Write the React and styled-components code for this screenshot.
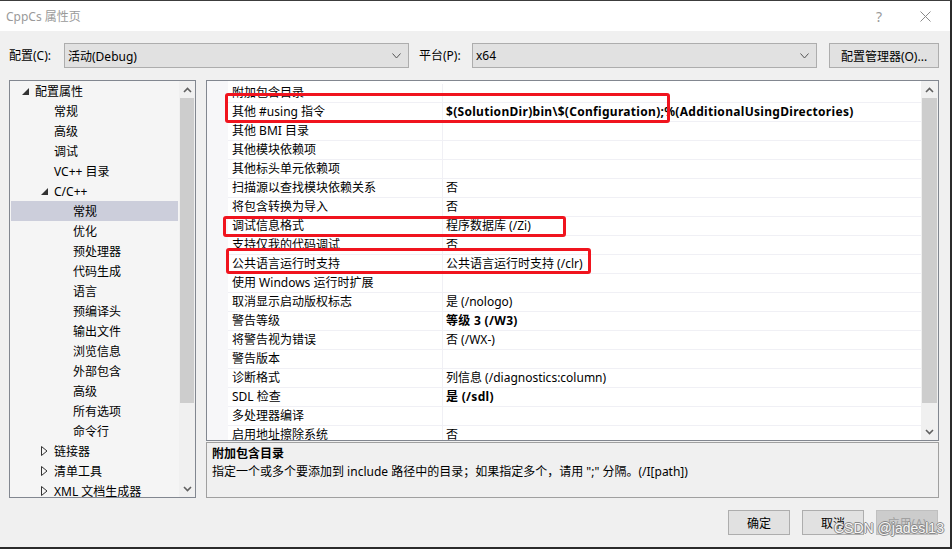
import styled, { createGlobalStyle } from "styled-components"

const Global = createGlobalStyle`
  body {
    margin: 0;
    background: #f0f0f0;
    font-family: "Noto Sans", "Noto Sans CJK SC", sans-serif;
    font-size: 12px;
    color: #000;
  }
`

const Window = styled.div`
  position: relative;
  width: 952px;
  height: 549px;
  box-sizing: border-box;
  background: #f0f0f0;
  border-top: 1px solid #3c3c3c;
  border-right: 2px solid #2b2b2b;
  border-bottom: 2px solid #2b2b2b;
  overflow: hidden;
`

const TitleBar = styled.div`
  height: 30px;
  background: #fff;
  display: flex;
  align-items: center;
  padding: 0 2px 0 6px;
  color: #9a9a9a;
  font-size: 12px;
`

const TitleText = styled.div`
  flex: 1;
`

const TitleBtn = styled.div`
  width: 46px;
  height: 30px;
  display: flex;
  align-items: center;
  justify-content: center;
  color: #9a9a9a;
  font-size: 14px;
`

const Body = styled.div`
  padding: 12px 11px 0 9px;
`

const ConfigRow = styled.div`
  display: flex;
  align-items: center;
  height: 25px;
`

const Label = styled.div`
  width: ${(p) => p.w}px;
  line-height: 25px;
`

const Combo = styled.div`
  width: ${(p) => p.w}px;
  height: 25px;
  box-sizing: border-box;
  border: 1px solid #adadad;
  background: #e1e1e1;
  display: flex;
  align-items: center;
  padding-left: 3px;
  margin-right: 10px;
`

const ComboText = styled.div`
  flex: 1;
`

const Chevron = styled.svg`
  width: 9px;
  height: 6px;
  margin-right: 7px;
`

const Button = styled.div`
  width: ${(p) => p.w || 62}px;
  height: 25px;
  box-sizing: border-box;
  border: 1px solid ${(p) => (p.disabled ? "#bfbfbf" : "#adadad")};
  background: ${(p) => (p.disabled ? "#cccccc" : "#e1e1e1")};
  display: flex;
  align-items: center;
  justify-content: center;
  margin-left: ${(p) => p.ml || 0}px;
  color: ${(p) => (p.disabled ? "#a0a0a0" : "#000")};
`

const Main = styled.div`
  display: flex;
  margin-top: 12px;
  height: 418px;
`

const Tree = styled.div`
  width: 187px;
  box-sizing: border-box;
  border: 1px solid #828790;
  background: #f5f5f5;
  display: flex;
  overflow: hidden;
`

const TreeList = styled.div`
  flex: 1;
  padding: 0 1px;
`

const TreeItem = styled.div`
  height: 20px;
  display: flex;
  align-items: center;
  padding-left: ${(p) => p.level * 19 + 11}px;
  background: ${(p) => (p.selected ? "#cccedb" : "transparent")};
  white-space: nowrap;
`

const Arrow = styled.span`
  width: 13px;
  display: inline-flex;
  align-items: center;
`

const VScroll = styled.div`
  width: ${(p) => p.w || 16}px;
  background: #f0f0f0;
  display: flex;
  flex-direction: column;
  align-items: center;
`

const ScrollBtn = styled.div`
  height: 17px;
  width: 100%;
  display: flex;
  align-items: center;
  justify-content: center;
`

const Thumb = styled.div`
  width: calc(100% - 2px);
  height: ${(p) => p.h}px;
  background: #cdcdcd;
`

const Spacer = styled.div`
  flex: 1;
`

const RightCol = styled.div`
  margin-left: 10px;
  flex: 1;
  display: flex;
  flex-direction: column;
`

const Grid = styled.div`
  height: 361px;
  box-sizing: border-box;
  border: 1px solid #828790;
  background: #fff;
  display: flex;
  overflow: hidden;
`

const GridMargin = styled.div`
  width: 21px;
  background: #f7f7f9;
`

const Rows = styled.div`
  flex: 1;
  padding-top: 3px;
`

const Row = styled.div`
  height: 19px;
  box-sizing: border-box;
  display: flex;
  border-bottom: 1px solid #f0f0f5;
`

const NameCell = styled.div`
  width: 215px;
  padding-left: 4px;
  box-sizing: border-box;
  line-height: 18px;
  border-right: 1px solid #f0f0f5;
  white-space: nowrap;
  overflow: hidden;
`

const ValueCell = styled.div`
  flex: 1;
  padding-left: 3px;
  line-height: 18px;
  white-space: nowrap;
  overflow: hidden;
  font-weight: ${(p) => (p.bold ? 700 : 400)};
  letter-spacing: ${(p) => (p.bold ? "0.3px" : "0")};
`

const Desc = styled.div`
  margin-top: 1px;
  height: 56px;
  box-sizing: border-box;
  border: 1px solid #a0a0a0;
  background: #f0f0f0;
  padding: 2px 5px;
`

const DescTitle = styled.div`
  font-weight: 700;
  line-height: 18px;
`

const DescText = styled.div`
  line-height: 18px;
`

const Footer = styled.div`
  display: flex;
  justify-content: flex-end;
  margin-top: 12px;
  padding-right: 1px;
`

const Mark = styled.div`
  position: absolute;
  left: ${(p) => p.x}px;
  top: ${(p) => p.y}px;
  width: ${(p) => p.w}px;
  height: ${(p) => p.h}px;
  box-sizing: border-box;
  border: 3px solid #f0141e;
  border-radius: 3px;
  pointer-events: none;
`

const Watermark = styled.div`
  position: absolute;
  left: 834px;
  top: 519px;
  font-family: "Liberation Sans", Arial, sans-serif;
  font-size: 14px;
  line-height: 17px;
  white-space: nowrap;
  color: #f6f6f6;
  text-shadow: 1px 0 0 #8a8a8a, -1px 0 0 #8a8a8a, 0 1px 0 #8a8a8a, 0 -1px 0 #8a8a8a;
`

const Expanded = () => (
  <svg width="7" height="7" viewBox="0 0 7 7">
    <path d="M7 0 L7 7 L0 7 Z" fill="#333" />
  </svg>
)

const Collapsed = () => (
  <svg width="7" height="10" viewBox="0 0 7 10">
    <path d="M0.5 0.5 L6 5 L0.5 9.5 Z" fill="none" stroke="#333" />
  </svg>
)

const Up = () => (
  <svg width="9" height="6" viewBox="0 0 9 6">
    <path d="M1 5 L4.5 1.5 L8 5" fill="none" stroke="#606060" strokeWidth="1.6" />
  </svg>
)

const Down = () => (
  <svg width="9" height="6" viewBox="0 0 9 6">
    <path d="M1 1 L4.5 4.5 L8 1" fill="none" stroke="#606060" strokeWidth="1.6" />
  </svg>
)

const treeItems = [
  { t: "配置属性", level: 0, arrow: "open" },
  { t: "常规", level: 1 },
  { t: "高级", level: 1 },
  { t: "调试", level: 1 },
  { t: "VC++ 目录", level: 1 },
  { t: "C/C++", level: 1, arrow: "open" },
  { t: "常规", level: 2, selected: true },
  { t: "优化", level: 2 },
  { t: "预处理器", level: 2 },
  { t: "代码生成", level: 2 },
  { t: "语言", level: 2 },
  { t: "预编译头", level: 2 },
  { t: "输出文件", level: 2 },
  { t: "浏览信息", level: 2 },
  { t: "外部包含", level: 2 },
  { t: "高级", level: 2 },
  { t: "所有选项", level: 2 },
  { t: "命令行", level: 2 },
  { t: "链接器", level: 1, arrow: "closed" },
  { t: "清单工具", level: 1, arrow: "closed" },
  { t: "XML 文档生成器", level: 1, arrow: "closed" },
]

const props = [
  ["附加包含目录", ""],
  ["其他 #using 指令", "$(SolutionDir)bin\\$(Configuration);%(AdditionalUsingDirectories)", true],
  ["其他 BMI 目录", ""],
  ["其他模块依赖项", ""],
  ["其他标头单元依赖项", ""],
  ["扫描源以查找模块依赖关系", "否"],
  ["将包含转换为导入", "否"],
  ["调试信息格式", "程序数据库 (/Zi)"],
  ["支持仅我的代码调试", "否"],
  ["公共语言运行时支持", "公共语言运行时支持 (/clr)"],
  ["使用 Windows 运行时扩展", ""],
  ["取消显示启动版权标志", "是 (/nologo)"],
  ["警告等级", "等级 3 (/W3)", true],
  ["将警告视为错误", "否 (/WX-)"],
  ["警告版本", ""],
  ["诊断格式", "列信息 (/diagnostics:column)"],
  ["SDL 检查", "是 (/sdl)", true],
  ["多处理器编译", ""],
  ["启用地址擦除系统", "否"],
]

export default function App() {
  return (
    <>
      <Global />
      <Window>
        <TitleBar>
          <TitleText>CppCs 属性页</TitleText>
          <TitleBtn>?</TitleBtn>
          <TitleBtn>
            <svg width="11" height="11" viewBox="0 0 11 11">
              <path d="M0.5 0.5 L10.5 10.5 M10.5 0.5 L0.5 10.5" stroke="#8a8a8a" strokeWidth="1" />
            </svg>
          </TitleBtn>
        </TitleBar>
        <Body>
          <ConfigRow>
            <Label w={55}>配置(C):</Label>
            <Combo w={345}>
              <ComboText>活动(Debug)</ComboText>
              <Chevron viewBox="0 0 9 6">
                <path d="M0.5 0.5 L4.5 5 L8.5 0.5" fill="none" stroke="#555" />
              </Chevron>
            </Combo>
            <Label w={53}>平台(P):</Label>
            <Combo w={345}>
              <ComboText>x64</ComboText>
              <Chevron viewBox="0 0 9 6">
                <path d="M0.5 0.5 L4.5 5 L8.5 0.5" fill="none" stroke="#555" />
              </Chevron>
            </Combo>
            <Button w={110} ml={2}>配置管理器(O)...</Button>
          </ConfigRow>
          <Main>
            <Tree>
              <TreeList>
                {treeItems.map((it, i) => (
                  <TreeItem key={i} level={it.level} selected={it.selected}>
                    <Arrow>
                      {it.arrow === "open" && <Expanded />}
                      {it.arrow === "closed" && <Collapsed />}
                    </Arrow>
                    {it.t}
                  </TreeItem>
                ))}
              </TreeList>
              <VScroll>
                <ScrollBtn><Up /></ScrollBtn>
                <Thumb h={305} />
                <Spacer />
                <ScrollBtn><Down /></ScrollBtn>
              </VScroll>
            </Tree>
            <RightCol>
              <Grid>
                <GridMargin />
                <Rows>
                  {props.map(([n, v, b], i) => (
                    <Row key={i}>
                      <NameCell>{n}</NameCell>
                      <ValueCell bold={b}>{v}</ValueCell>
                    </Row>
                  ))}
                </Rows>
                <VScroll w={17}>
                  <ScrollBtn><Up /></ScrollBtn>
                  <Thumb h={305} />
                  <Spacer />
                  <ScrollBtn><Down /></ScrollBtn>
                </VScroll>
              </Grid>
              <Desc>
                <DescTitle>附加包含目录</DescTitle>
                <DescText>指定一个或多个要添加到 include 路径中的目录；如果指定多个，请用 ";" 分隔。(/I[path])</DescText>
              </Desc>
            </RightCol>
          </Main>
          <Footer>
            <Button>确定</Button>
            <Button ml={12}>取消</Button>
            <Button ml={12} disabled>应用(A)</Button>
          </Footer>
        </Body>
        <Mark x={225} y={92} w={445} h={30} />
        <Mark x={223} y={215} w={343} h={21} />
        <Mark x={226} y={247} w={365} h={26} />
        <Watermark>CSDN @jadesl13</Watermark>
      </Window>
    </>
  )
}
